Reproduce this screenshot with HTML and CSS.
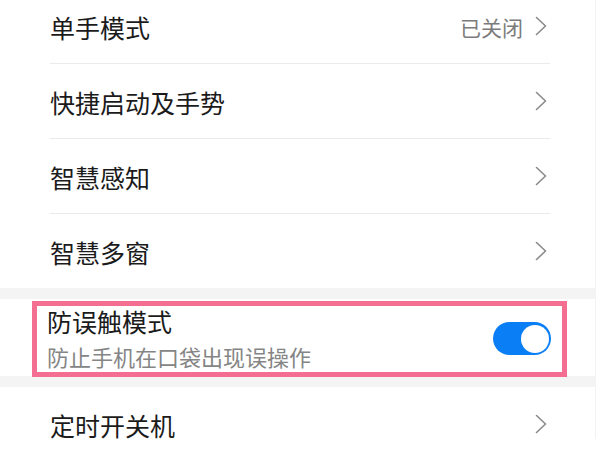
FILE: index.html
```html
<!DOCTYPE html>
<html lang="zh-CN">
<head>
<meta charset="utf-8">
<link rel="stylesheet" href="styles.css">
</head>
<body>
<div class="page">
  <div class="group group-top">
    <div class="row">
      <span class="label">单手模式</span>
      <span class="value">已关闭</span>
      <svg class="chev" width="12" height="20" viewBox="0 0 12 20"><polyline points="1.5,1.5 10.5,10 1.5,18.5" fill="none" stroke="#8a8a8a" stroke-width="1.6" stroke-linecap="round" stroke-linejoin="round"/></svg>
    </div>
    <div class="row">
      <span class="label">快捷启动及手势</span>
      <svg class="chev" width="12" height="20" viewBox="0 0 12 20"><polyline points="1.5,1.5 10.5,10 1.5,18.5" fill="none" stroke="#8a8a8a" stroke-width="1.6" stroke-linecap="round" stroke-linejoin="round"/></svg>
    </div>
    <div class="row">
      <span class="label">智慧感知</span>
      <svg class="chev" width="12" height="20" viewBox="0 0 12 20"><polyline points="1.5,1.5 10.5,10 1.5,18.5" fill="none" stroke="#8a8a8a" stroke-width="1.6" stroke-linecap="round" stroke-linejoin="round"/></svg>
    </div>
    <div class="row row-last">
      <span class="label">智慧多窗</span>
      <svg class="chev" width="12" height="20" viewBox="0 0 12 20"><polyline points="1.5,1.5 10.5,10 1.5,18.5" fill="none" stroke="#8a8a8a" stroke-width="1.6" stroke-linecap="round" stroke-linejoin="round"/></svg>
    </div>
  </div>
  <div class="gap"></div>
  <div class="section">
    <div class="texts">
      <div class="title">防误触模式</div>
      <div class="sub">防止手机在口袋出现误操作</div>
    </div>
    <div class="toggle"><div class="knob"></div></div>
    <div class="highlight"></div>
  </div>
  <div class="gap"></div>
  <div class="group">
    <div class="row row-last">
      <span class="label">定时开关机</span>
      <svg class="chev" width="12" height="20" viewBox="0 0 12 20"><polyline points="1.5,1.5 10.5,10 1.5,18.5" fill="none" stroke="#8a8a8a" stroke-width="1.6" stroke-linecap="round" stroke-linejoin="round"/></svg>
    </div>
  </div>
</div>
</body>
</html>
```
FILE: styles.css
```css
html, body {
  margin: 0;
  padding: 0;
  background: #ffffff;
  overflow: hidden;
}
body {
  width: 600px;
  height: 450px;
  font-family: "Noto Sans CJK SC", "Noto Sans", sans-serif;
}
.page {
  width: 595px;
  height: 450px;
  border-right: 1px solid #f3f3f3;
  background: #ffffff;
}
.group {
  padding: 0 45px 0 50px;
}
.group-top {
  margin-top: -11px;
}
.row {
  border-bottom: 1px solid #ebebeb;
  display: flex;
  align-items: center;
  padding-right: 3px;
  padding-top: 3px;
  box-sizing: content-box;
  height: 71px;
}
.row-last {
  border-bottom: none;
}
.label {
  flex: 1;
  font-size: 25px;
  line-height: 1;
  color: #1b1b1b;
}
.value {
  font-size: 21px;
  line-height: 1;
  color: #7b7b7b;
  margin-right: 12px;
}
.chev {
  display: block;
  margin-top: -3px;
}
.gap {
  height: 11px;
  background: #f4f4f4;
}
.section {
  position: relative;
  height: 77px;
  display: flex;
  align-items: center;
  padding: 0 44px 0 47px;
}
.texts {
  flex: 1;
  display: flex;
  flex-direction: column;
  gap: 11px;
}
.title {
  font-size: 25px;
  line-height: 1;
  color: #1b1b1b;
}
.sub {
  font-size: 22px;
  line-height: 1;
  color: #858585;
}
.toggle {
  width: 58px;
  height: 33px;
  border-radius: 17px;
  background: #0a7ef5;
  display: flex;
  align-items: center;
  justify-content: flex-end;
  padding-right: 2px;
  box-sizing: border-box;
  margin-top: 2px;
}
.knob {
  width: 28px;
  height: 28px;
  border-radius: 50%;
  background: #ffffff;
}
.highlight {
  position: absolute;
  left: 32px;
  top: 2px;
  width: 535px;
  height: 76px;
  border: 5px solid #f36e91;
  box-sizing: border-box;
}
```
